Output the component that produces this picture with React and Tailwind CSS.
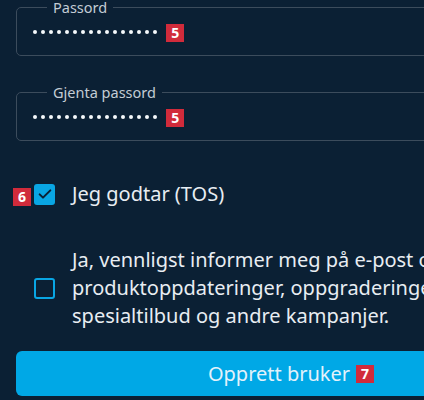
import React from "react";

const DOTS = Array.from({ length: 16 });

function Badge({ n }) {
  return (
    <span className="inline-flex items-center justify-center w-[18px] h-[18px] bg-[#d12b3b] text-white text-[14px] font-bold leading-none">
      {n}
    </span>
  );
}

function PasswordField({ label, className = "" }) {
  return (
    <fieldset className={`border border-[#3c4c5c] rounded-[5px] h-[56px] pl-[16px] ${className}`}>
      <legend className="ml-[14px] px-[6px] text-[14.5px] leading-[15px] text-[#c3ccd5]">{label}</legend>
      <div className="flex items-center h-[34px]">
        <div className="flex gap-[3.6px]">
          {DOTS.map((_, i) => (
            <span key={i} className="w-[4.4px] h-[4.4px] rounded-full bg-[#f5f8fb]" />
          ))}
        </div>
        <span className="ml-[9px]">
          <Badge n="5" />
        </span>
      </div>
    </fieldset>
  );
}

export default function App() {
  return (
    <div className="w-[424px] h-[400px] overflow-hidden bg-[#0b2034]">
      <div
        className="w-[582px] px-4 text-[#e8edf2]"
        style={{ fontFamily: '"Noto Sans", "Open Sans", sans-serif' }}
      >
        <PasswordField label="Passord" />
        <PasswordField label="Gjenta passord" className="mt-[29px]" />

        {/* TOS */}
        <div className="flex items-center h-[40px] mt-[33px] pl-[18px]">
          <div className="relative">
            <span className="absolute right-[calc(100%+3px)] top-0">
              <Badge n="6" />
            </span>
            <div className="w-[21px] h-[21px] rounded-[3px] bg-[#09a6e4] flex items-center justify-center">
              <svg width="16" height="16" viewBox="0 0 24 24" fill="none" stroke="#0b2034" strokeWidth="3" strokeLinecap="round" strokeLinejoin="round">
                <path d="M4 12.5l5 5L20 6.5" />
              </svg>
            </div>
          </div>
          <span className="ml-[17px] text-[20px]">Jeg godtar (TOS)</span>
        </div>

        {/* Newsletter */}
        <div className="flex items-center mt-[32px] pl-[18px]">
          <div className="w-[21px] h-[21px] shrink-0 rounded-[3px] border-2 border-[#09a6e4]" />
          <p className="ml-[17px] text-[20px] leading-[28px] whitespace-nowrap">
            Ja, vennligst informer meg på e-post om nyheter,
            <br />
            produktoppdateringer, oppgraderinger,
            <br />
            spesialtilbud og andre kampanjer.
          </p>
        </div>

        <button className="mt-[21px] w-full h-[45px] rounded-[6px] bg-[#00a8e6] flex items-center justify-center gap-[6px] text-[20px] text-[#e3f2fb]">
          Opprett bruker
          <Badge n="7" />
        </button>
      </div>
    </div>
  );
}
